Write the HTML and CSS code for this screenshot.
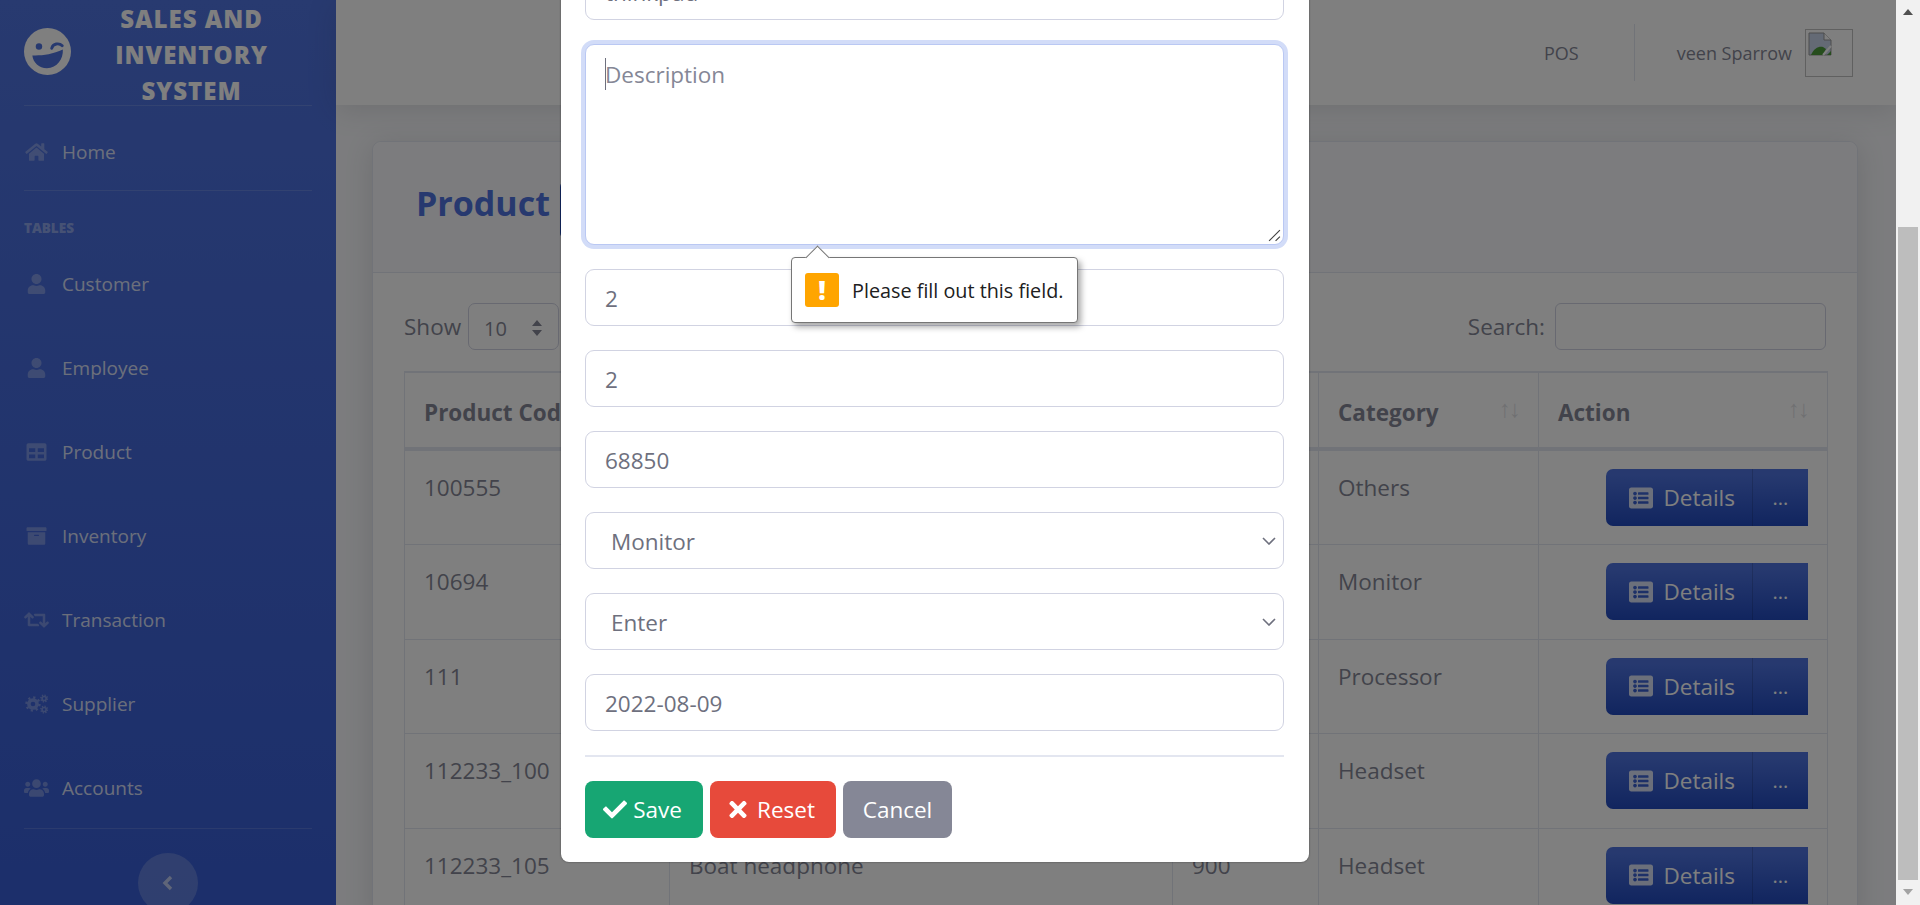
FILE: index.html
```html
<!DOCTYPE html>
<html lang="en">
<head>
    <meta charset="UTF-8">
    <meta name="viewport" content="width=device-width, initial-scale=1.0">
    <title>Sales and Inventory System</title>
    <link rel="stylesheet" href="styles.css">
</head>
<body>
    <svg class="icon-defs" aria-hidden="true">
        <symbol id="i-home" viewBox="0 0 576 512"><path d="M280.37 148.26L96 300.11V464a16 16 0 0 0 16 16l112.06-.29a16 16 0 0 0 15.92-16V368a16 16 0 0 1 16-16h64a16 16 0 0 1 16 16v95.64a16 16 0 0 0 16 16.05L464 480a16 16 0 0 0 16-16V300L295.67 148.26a12.19 12.19 0 0 0-15.3 0zM571.6 251.47L488 182.56V44.05a12 12 0 0 0-12-12h-56a12 12 0 0 0-12 12v72.61L318.47 43a48 48 0 0 0-61 0L4.34 251.47a12 12 0 0 0-1.6 16.9l25.5 31A12 12 0 0 0 45.15 301l235.22-193.74a12.19 12.19 0 0 1 15.3 0L530.9 301a12 12 0 0 0 16.9-1.6l25.5-31a12 12 0 0 0-1.7-16.93z"/></symbol>
        <symbol id="i-user" viewBox="0 0 448 512"><path d="M224 256c70.7 0 128-57.3 128-128S294.7 0 224 0 96 57.3 96 128s57.3 128 128 128zm89.6 32h-16.7c-22.2 10.2-46.9 16-72.9 16s-50.6-5.8-72.9-16h-16.7C60.2 288 0 348.2 0 422.4V464c0 26.5 21.5 48 48 48h352c26.5 0 48-21.5 48-48v-41.6c0-74.2-60.2-134.4-134.4-134.4z"/></symbol>
        <symbol id="i-table" viewBox="0 0 512 512"><path d="M464 32H48C21.49 32 0 53.49 0 80v352c0 26.51 21.49 48 48 48h416c26.51 0 48-21.49 48-48V80c0-26.51-21.49-48-48-48zM224 416H64v-96h160v96zm0-160H64v-96h160v96zm224 160H288v-96h160v96zm0-160H288v-96h160v96z"/></symbol>
        <symbol id="i-archive" viewBox="0 0 512 512"><path d="M32 448c0 17.7 14.3 32 32 32h384c17.7 0 32-14.3 32-32V160H32v288zm160-212c0-6.6 5.4-12 12-12h104c6.6 0 12 5.4 12 12v8c0 6.6-5.4 12-12 12H204c-6.6 0-12-5.4-12-12v-8zM480 32H32C14.3 32 0 46.3 0 64v48c0 8.8 7.2 16 16 16h480c8.8 0 16-7.2 16-16V64c0-17.7-14.3-32-32-32z"/></symbol>
        <symbol id="i-retweet" viewBox="0 0 640 512"><path d="M629.657 343.598L528.971 444.284c-9.373 9.372-24.568 9.372-33.941 0L394.343 343.598c-9.373-9.373-9.373-24.569 0-33.941l10.823-10.823c9.562-9.562 25.133-9.34 34.419.492L480 342.118V160H292.451a24.005 24.005 0 0 1-16.971-7.029l-16-16C244.361 121.851 255.069 96 276.451 96H520c13.255 0 24 10.745 24 24v222.118l40.416-42.792c9.285-9.831 24.856-10.054 34.419-.492l10.823 10.823c9.372 9.372 9.372 24.569-.001 33.941zm-265.138 15.431A23.999 23.999 0 0 0 347.548 352H160V169.881l40.416 42.792c9.286 9.831 24.856 10.054 34.419.491l10.822-10.822c9.373-9.373 9.373-24.569 0-33.941L144.971 67.716c-9.373-9.373-24.569-9.373-33.941 0L10.343 168.402c-9.373 9.373-9.373 24.569 0 33.941l10.822 10.822c9.562 9.562 25.133 9.34 34.419-.491L96 169.881V392c0 13.255 10.745 24 24 24h243.549c21.382 0 32.09-25.851 16.971-40.971l-16.001-16z"/></symbol>
        <symbol id="i-users" viewBox="0 0 640 512"><path d="M96 224c35.3 0 64-28.7 64-64s-28.7-64-64-64-64 28.7-64 64 28.7 64 64 64zm448 0c35.3 0 64-28.7 64-64s-28.7-64-64-64-64 28.7-64 64 28.7 64 64 64zm32 32h-64c-17.6 0-33.5 7.1-45.1 18.6 40.3 22.1 68.9 62 75.1 109.4h66c17.7 0 32-14.3 32-32v-32c0-35.3-28.7-64-64-64zm-256 0c61.9 0 112-50.1 112-112S381.9 32 320 32 208 82.1 208 144s50.1 112 112 112zm76.8 32h-8.3c-20.8 10-43.9 16-68.5 16s-47.6-6-68.5-16h-8.3C179.6 288 128 339.6 128 403.2V432c0 26.5 21.5 48 48 48h288c26.5 0 48-21.5 48-48v-28.8c0-63.6-51.6-115.2-115.2-115.2zm-223.7-13.4C161.5 263.1 145.6 256 128 256H64c-35.3 0-64 28.7-64 64v32c0 17.7 14.3 32 32 32h65.9c6.3-47.4 34.9-87.3 75.2-109.4z"/></symbol>
        <symbol id="i-cogs" viewBox="0 0 640 512">
            <circle cx="230" cy="256" r="105" fill="none" stroke="currentColor" stroke-width="90"/>
            <circle cx="230" cy="256" r="172" fill="none" stroke="currentColor" stroke-width="50" stroke-dasharray="58 77"/>
            <circle cx="515" cy="115" r="52" fill="none" stroke="currentColor" stroke-width="42"/>
            <circle cx="515" cy="115" r="88" fill="none" stroke="currentColor" stroke-width="30" stroke-dasharray="34 35"/>
            <circle cx="515" cy="397" r="52" fill="none" stroke="currentColor" stroke-width="42"/>
            <circle cx="515" cy="397" r="88" fill="none" stroke="currentColor" stroke-width="30" stroke-dasharray="34 35"/>
        </symbol>
        <symbol id="i-list" viewBox="0 0 512 512"><path d="M464 480H48c-26.51 0-48-21.49-48-48V80c0-26.51 21.49-48 48-48h416c26.51 0 48 21.49 48 48v352c0 26.51-21.49 48-48 48zM128 120c-22.091 0-40 17.909-40 40s17.909 40 40 40 40-17.909 40-40-17.909-40-40-40zm0 96c-22.091 0-40 17.909-40 40s17.909 40 40 40 40-17.909 40-40-17.909-40-40-40zm0 96c-22.091 0-40 17.909-40 40s17.909 40 40 40 40-17.909 40-40-17.909-40-40-40zm288-136v-32c0-6.627-5.373-12-12-12H204c-6.627 0-12 5.373-12 12v32c0 6.627 5.373 12 12 12h200c6.627 0 12-5.373 12-12zm0 96v-32c0-6.627-5.373-12-12-12H204c-6.627 0-12 5.373-12 12v32c0 6.627 5.373 12 12 12h200c6.627 0 12-5.373 12-12zm0 96v-32c0-6.627-5.373-12-12-12H204c-6.627 0-12 5.373-12 12v32c0 6.627 5.373 12 12 12h200c6.627 0 12-5.373 12-12z"/></symbol>
    </svg>

    <div class="page">
        <!-- Sidebar -->
        <aside class="sidebar">
            <div class="brand">
                <svg class="brand-logo" viewBox="0 0 496 496">
                    <circle cx="248" cy="248" r="248" fill="#fff"/>
                    <circle cx="158" cy="196" r="34" fill="#4e73df"/>
                    <path d="M292 214c14-50 78-62 112-26" fill="none" stroke="#4e73df" stroke-width="30" stroke-linecap="round"/>
                    <path d="M88 290c90 4 210-8 322-62 6 100-60 196-168 196-84 0-146-60-154-134z" fill="#4e73df"/>
                </svg>
                <div class="brand-text">Sales and Inventory System</div>
            </div>
            <a class="nav-item nav-home"><svg class="nav-icon"><use href="#i-home"/></svg>Home</a>
            <div class="nav-heading">Tables</div>
            <a class="nav-item"><svg class="nav-icon"><use href="#i-user"/></svg>Customer</a>
            <a class="nav-item"><svg class="nav-icon"><use href="#i-user"/></svg>Employee</a>
            <a class="nav-item"><svg class="nav-icon"><use href="#i-table"/></svg>Product</a>
            <a class="nav-item"><svg class="nav-icon"><use href="#i-archive"/></svg>Inventory</a>
            <a class="nav-item"><svg class="nav-icon"><use href="#i-retweet"/></svg>Transaction</a>
            <a class="nav-item"><svg class="nav-icon"><use href="#i-cogs"/></svg>Supplier</a>
            <a class="nav-item nav-last"><svg class="nav-icon"><use href="#i-users"/></svg>Accounts</a>
            <div class="sidebar-toggle">
                <svg viewBox="0 0 12 18"><path d="M9 3L3 9l6 6" fill="none" stroke="currentColor" stroke-width="3.4"/></svg>
            </div>
        </aside>

        <!-- Content -->
        <div class="content">
            <header class="topbar">
                <span class="topbar-link">POS</span>
                <span class="topbar-divider"></span>
                <span class="topbar-user">veen Sparrow</span>
                <span class="avatar">
                    <svg viewBox="0 0 24 24" width="24" height="24">
                        <path d="M1 1h15l7 7v15H1z" fill="#c8d4ea" stroke="#999" stroke-width="1"/>
                        <path d="M16 1v7h7" fill="#fff" stroke="#999" stroke-width="1"/>
                        <path d="M3 23c3-7 8-9 12-8l3 2-3 6z" fill="#4c9a3a"/>
                        <path d="M19 23l4-4v4z" fill="#4c9a3a"/>
                        <path d="M15 23l8-9" stroke="#fff" stroke-width="2"/>
                    </svg>
                </span>
            </header>

            <main class="main">
                <section class="card">
                    <div class="card-header">
                        <h4 class="card-title">Product</h4>
                        <a class="btn-add"></a>
                    </div>
                    <div class="card-body">
                        <div class="table-tools">
                            <label class="tool-label">Show
                                <span class="length-select">10
                                    <svg viewBox="0 0 12 18" width="12" height="18"><path d="M6 1l5 6H1zM6 17l5-6H1z" fill="#858796"/></svg>
                                </span>
                            </label>
                            <label class="tool-label">Search:
                                <span class="search-box"></span>
                            </label>
                        </div>
                        <table class="data-table">
                            <colgroup>
                                <col class="col-code"><col class="col-name"><col class="col-price"><col class="col-cat"><col class="col-action">
                            </colgroup>
                            <thead>
                                <tr>
                                    <th>Product Code</th>
                                    <th>Name</th>
                                    <th>Price</th>
                                    <th><div class="th-inner">Category<span class="sort-arrows">↑↓</span></div></th>
                                    <th><div class="th-inner">Action<span class="sort-arrows">↑↓</span></div></th>
                                </tr>
                            </thead>
                            <tbody>
                                <tr>
                                    <td>100555</td><td></td><td></td><td>Others</td>
                                    <td><div class="btn-group"><a class="btn-details"><svg class="list-icon"><use href="#i-list"/></svg>Details</a><a class="btn-more">...</a></div></td>
                                </tr>
                                <tr>
                                    <td>10694</td><td></td><td></td><td>Monitor</td>
                                    <td><div class="btn-group"><a class="btn-details"><svg class="list-icon"><use href="#i-list"/></svg>Details</a><a class="btn-more">...</a></div></td>
                                </tr>
                                <tr>
                                    <td>111</td><td></td><td></td><td>Processor</td>
                                    <td><div class="btn-group"><a class="btn-details"><svg class="list-icon"><use href="#i-list"/></svg>Details</a><a class="btn-more">...</a></div></td>
                                </tr>
                                <tr>
                                    <td>112233_100</td><td></td><td></td><td>Headset</td>
                                    <td><div class="btn-group"><a class="btn-details"><svg class="list-icon"><use href="#i-list"/></svg>Details</a><a class="btn-more">...</a></div></td>
                                </tr>
                                <tr>
                                    <td>112233_105</td><td>Boat headphone</td><td>900</td><td>Headset</td>
                                    <td><div class="btn-group"><a class="btn-details"><svg class="list-icon"><use href="#i-list"/></svg>Details</a><a class="btn-more">...</a></div></td>
                                </tr>
                            </tbody>
                        </table>
                    </div>
                </section>
            </main>
        </div>

        <div class="backdrop"></div>

        <!-- Modal -->
        <div class="modal">
            <form class="modal-form">
                <input class="field" type="text" value="thinkpad">
                <div class="field-area">
                    <span class="caret"></span>
                    <span class="placeholder">Description</span>
                    <svg class="resize-grip" viewBox="0 0 12 12"><path d="M1 11L11 1M7 11l4-4" stroke="#444" stroke-width="1.1"/></svg>
                </div>
                <input class="field" type="text" value="2">
                <input class="field" type="text" value="2">
                <input class="field" type="text" value="68850">
                <select class="field field-select"><option>Monitor</option></select>
                <select class="field field-select"><option>Enter</option></select>
                <input class="field" type="text" value="2022-08-09">
                <hr class="modal-rule">
                <div class="modal-actions">
                    <button type="button" class="btn btn-save"><svg viewBox="0 0 512 512"><path d="M173.898 439.404l-166.4-166.4c-9.997-9.997-9.997-26.206 0-36.204l36.203-36.204c9.997-9.998 26.207-9.998 36.204 0L192 312.69 432.095 72.596c9.997-9.997 26.207-9.997 36.204 0l36.203 36.204c9.997 9.997 9.997 26.206 0 36.204l-294.4 294.401c-9.998 9.997-26.207 9.997-36.204-.001z"/></svg>Save</button>
                    <button type="button" class="btn btn-reset"><svg viewBox="0 0 352 512"><path d="M242.72 256l100.07-100.07c12.28-12.28 12.28-32.19 0-44.48l-22.24-22.24c-12.28-12.28-32.19-12.28-44.48 0L176 189.28 75.93 89.21c-12.28-12.28-32.19-12.28-44.48 0L9.21 111.45c-12.28 12.28-12.28 32.19 0 44.48L109.28 256 9.21 356.07c-12.28 12.28-12.28 32.19 0 44.48l22.24 22.24c12.28 12.28 32.2 12.28 44.48 0L176 322.72l100.07 100.07c12.28 12.28 32.2 12.28 44.48 0l22.24-22.24c12.28-12.28 12.28-32.19 0-44.48L242.72 256z"/></svg>Reset</button>
                    <button type="button" class="btn btn-cancel">Cancel</button>
                </div>
            </form>
        </div>

        <!-- Validation bubble -->
        <div class="bubble">
            <span class="bubble-arrow"></span>
            <span class="bubble-icon">!</span>
            <span>Please fill out this field.</span>
        </div>
    </div>

    <!-- Scrollbar -->
    <div class="scrollbar">
        <span class="scroll-up"></span>
        <span class="scroll-thumb"></span>
        <span class="scroll-down"></span>
    </div>
</body>
</html>
```

FILE: styles.css
```css
* {
    box-sizing: border-box;
}
html, body {
    height: 905px;
    overflow: hidden;
}
body {
    margin: 0;
    display: flex;
    font-family: "Open Sans", "Noto Sans", sans-serif;
    font-size: 22.5px;
    color: #858796;
    background: #f8f9fc;
}
.icon-defs {
    display: none;
}
.page {
    position: relative;
    flex: 1;
    display: flex;
    overflow: hidden;
}

/* sidebar */
.sidebar {
    width: 336px;
    flex-shrink: 0;
    padding: 0 24px;
    color: #fff;
    background: linear-gradient(180deg, #5074e0 0%, #385ed6 100%);
}
.brand {
    display: flex;
    align-items: center;
    height: 106px;
    border-bottom: 1px solid rgba(255, 255, 255, .15);
}
.brand-logo {
    width: 47px;
    height: 47px;
    flex-shrink: 0;
    margin-top: -3px;
}
.brand-text {
    flex: 1;
    padding: 4px 18px 0;
    text-align: center;
    text-transform: uppercase;
    font-size: 24px;
    font-weight: 800;
    letter-spacing: 1px;
    line-height: 36px;
}
.nav-item {
    display: flex;
    align-items: center;
    height: 84px;
    padding-top: 4px;
    font-size: 19px;
    color: rgba(255, 255, 255, .8);
}
.nav-home {
    height: 85px;
    padding-top: 8px;
    border-bottom: 1px solid rgba(255, 255, 255, .15);
}
.nav-last {
    height: 85px;
    padding-bottom: 1px;
    border-bottom: 1px solid rgba(255, 255, 255, .15);
}
.nav-icon {
    width: 25px;
    height: 20px;
    margin-right: 13px;
    fill: currentColor;
    color: rgba(255, 255, 255, .3);
}
.nav-heading {
    height: 49px;
    padding-top: 27px;
    font-size: 13.5px;
    font-weight: 800;
    line-height: 20px;
    text-transform: uppercase;
    color: rgba(255, 255, 255, .4);
}
.sidebar-toggle {
    display: flex;
    align-items: center;
    justify-content: center;
    width: 60px;
    height: 60px;
    margin: 24px auto 0;
    border-radius: 50%;
    color: rgba(255, 255, 255, .6);
    background: rgba(255, 255, 255, .2);
}
.sidebar-toggle svg {
    width: 12px;
    height: 18px;
}

/* topbar and card */
.content {
    flex: 1;
    min-width: 0;
}
.topbar {
    display: flex;
    align-items: center;
    justify-content: flex-end;
    height: 105px;
    padding-right: 43px;
    font-size: 18px;
    color: #858796;
    background: #fff;
    box-shadow: 0 4px 28px rgba(58, 59, 69, .15);
}
.topbar-divider {
    width: 1px;
    height: 57px;
    margin: 0 42px 0 55px;
    background: #e3e6f0;
}
.topbar-user {
    margin-right: 13px;
}
.avatar {
    width: 48px;
    height: 48px;
    padding: 2px;
    border: 1px solid #c0c0c0;
}
.avatar svg {
    display: block;
}
.main {
    padding: 36px 38px 0 36px;
}
.card {
    background: #fff;
    border: 1px solid #e3e6f0;
    border-radius: 9px;
    box-shadow: 0 4px 28px rgba(58, 59, 69, .15);
}
.card-header {
    display: flex;
    align-items: center;
    height: 131px;
    padding: 6px 0 0 43px;
    background: #f8f9fc;
    border-bottom: 1px solid #e3e6f0;
    border-radius: 9px 9px 0 0;
}
.card-title {
    margin: -14px 0 0;
    font-size: 34px;
    font-weight: 700;
    color: #4e73df;
}
.btn-add {
    width: 90px;
    height: 58px;
    margin-left: 10px;
    background: #224abe;
    border-radius: 6px 0 0 6px;
}
.card-body {
    padding: 30px 31px 0;
}
.table-tools {
    display: flex;
    justify-content: space-between;
    margin-bottom: 21px;
}
.tool-label {
    display: flex;
    align-items: center;
    gap: 7px;
}
.length-select {
    display: flex;
    align-items: center;
    justify-content: space-between;
    width: 91px;
    height: 47px;
    padding: 3px 15px 0;
    font-size: 20px;
    border: 1px solid #d1d3e2;
    border-radius: 7px;
}
.search-box {
    width: 271px;
    height: 47px;
    margin-left: 3px;
    border: 1px solid #d1d3e2;
    border-radius: 6px;
}

/* table */
.data-table {
    width: 1423px;
    table-layout: fixed;
    border-collapse: collapse;
}
.col-code { width: 265px; }
.col-name { width: 503px; }
.col-price { width: 146px; }
.col-cat { width: 220px; }
.col-action { width: 289px; }
.data-table th {
    height: 77px;
    padding: 4px 19px 0;
    text-align: left;
    white-space: nowrap;
    overflow: hidden;
    font-weight: 700;
    border: 1px solid #e3e6f0;
    border-top-width: 2px;
    border-bottom-width: 4px;
}
.data-table td {
    height: 94.6px;
    padding: 18px 19px;
    vertical-align: top;
    line-height: 37px;
    border: 1px solid #e3e6f0;
}
.th-inner {
    display: flex;
    justify-content: space-between;
}
.sort-arrows {
    margin-top: -4px;
    font-weight: 400;
    font-size: 24px;
    line-height: 30px;
    letter-spacing: -2px;
    opacity: .25;
}
.btn-group {
    display: flex;
    justify-content: flex-end;
    height: 57px;
    color: #fff;
}
.btn-details, .btn-more {
    display: flex;
    align-items: center;
    background: linear-gradient(180deg, #4e73df 10%, #224abe 100%);
}
.btn-details {
    padding: 0 17px 0 23px;
    border-radius: 7px 0 0 7px;
    border-right: 1px solid rgba(0, 0, 0, .15);
}
.btn-more {
    justify-content: center;
    width: 55px;
    font-size: 20px;
}
.list-icon {
    width: 24px;
    height: 24px;
    margin-right: 10px;
    fill: rgba(255, 255, 255, .8);
}

/* dark layer and modal */
.backdrop {
    position: absolute;
    inset: 0;
    background: rgba(0, 0, 0, .5);
}
.modal {
    position: absolute;
    left: 561px;
    bottom: 43px;
    width: 748px;
    padding: 0 25px 24px 24px;
    background: #fff;
    border-radius: 0 0 8px 8px;
    box-shadow: 0 0 2px rgba(0, 0, 0, .5);
}
.modal-form {
    display: flex;
    flex-direction: column;
    gap: 24px;
}
.field {
    width: 100%;
    height: 57px;
    padding: 2px 19px 0;
    font-family: inherit;
    font-size: 22.5px;
    color: #6e707e;
    background: #fff;
    border: 1px solid #d1d3e2;
    border-radius: 9px;
}
.field-select {
    padding: 2px 19px 0;
    appearance: none;
    text-indent: 6px;
    background: #fff url("data:image/svg+xml,%3Csvg xmlns='http://www.w3.org/2000/svg' viewBox='0 0 14 8'%3E%3Cpath d='M1 1l6 6 6-6' fill='none' stroke='%236e707e' stroke-width='1.6'/%3E%3C/svg%3E") no-repeat right 7px center / 14px 8px;
}
.field-area {
    position: relative;
    height: 201px;
    padding: 13px 19px;
    font-size: 22.5px;
    line-height: 34px;
    color: #858796;
    background: #fff;
    border: 1px solid #bac8f3;
    border-radius: 9px;
    box-shadow: 0 0 0 4px #d2dcf8;
}
.caret {
    position: absolute;
    left: 19px;
    top: 13px;
    width: 1px;
    height: 32px;
    background: #6e707e;
}
.resize-grip {
    position: absolute;
    right: 2px;
    bottom: 2px;
    width: 13px;
    height: 13px;
}
.modal-rule {
    width: 100%;
    height: 2px;
    margin: 0;
    border: 0;
    background: #e3e6f0;
}
.modal-actions {
    display: flex;
    gap: 7px;
}
.btn {
    display: flex;
    align-items: center;
    justify-content: center;
    height: 57px;
    font-family: inherit;
    font-size: 22.5px;
    color: #fff;
    border: 0;
    border-radius: 8px;
}
.btn svg {
    height: 25px;
    width: auto;
    fill: #fff;
}
.btn-save {
    width: 118px;
    padding-left: 3px;
    background: #17a673;
}
.btn-save svg {
    width: 24px;
    margin-right: 6px;
}
.btn-reset {
    width: 126px;
    padding-left: 3px;
    background: #e74a3b;
}
.btn-reset svg {
    width: 20px;
    margin-right: 9px;
}
.btn-cancel {
    width: 109px;
    background: #858796;
}

/* validation bubble */
.bubble {
    position: absolute;
    left: 791px;
    top: 257px;
    display: flex;
    align-items: center;
    gap: 13px;
    width: 287px;
    height: 66px;
    padding-left: 13px;
    font-size: 19.8px;
    color: #202020;
    background: #fff;
    border: 1px solid #767676;
    border-radius: 4px;
    box-shadow: 3px 4px 6px rgba(0, 0, 0, .35);
}
.bubble-arrow {
    position: absolute;
    left: 17px;
    top: -9px;
    width: 17px;
    height: 17px;
    background: #fff;
    border-top: 1px solid #767676;
    border-left: 1px solid #767676;
    transform: rotate(45deg);
}
.bubble-icon {
    width: 34px;
    height: 34px;
    flex-shrink: 0;
    font-size: 26px;
    font-weight: 800;
    line-height: 34px;
    text-align: center;
    color: #fff;
    background: #ffa500;
    border-radius: 3px;
}

/* scrollbar */
.scrollbar {
    position: relative;
    width: 24px;
    flex-shrink: 0;
    background: #f1f1f1;
}
.scroll-thumb {
    position: absolute;
    left: 2px;
    right: 2px;
    top: 227px;
    height: 653px;
    background: #bdbdbd;
}
.scroll-up, .scroll-down {
    position: absolute;
    left: 7px;
    width: 0;
    height: 0;
    border-left: 5px solid transparent;
    border-right: 5px solid transparent;
}
.scroll-up {
    top: 9px;
    border-bottom: 6px solid #505050;
}
.scroll-down {
    bottom: 10px;
    border-top: 6px solid #a3a3a3;
}
```
